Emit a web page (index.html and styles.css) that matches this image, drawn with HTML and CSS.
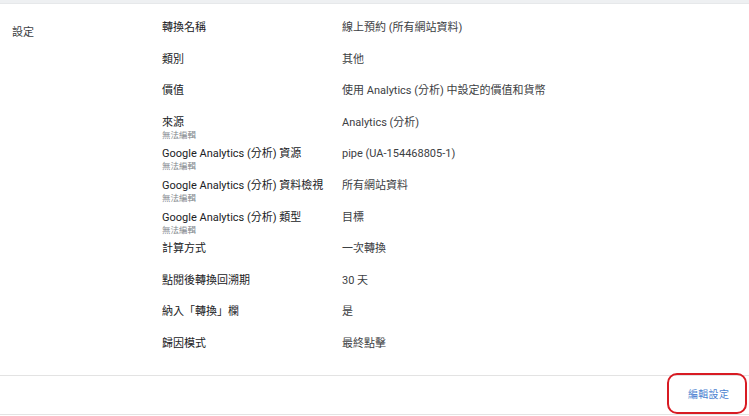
FILE: index.html
```html
<!DOCTYPE html>
<html lang="zh-Hant">
<head>
<meta charset="utf-8">
<link rel="stylesheet" href="styles.css">
</head>
<body>
<div class="topbar"></div>
<div class="section">
  <div class="section-title">設定</div>
  <div class="rows">
    <div class="row"><div class="label">轉換名稱</div><div class="value">線上預約 (所有網站資料)</div></div>
    <div class="row"><div class="label">類別</div><div class="value">其他</div></div>
    <div class="row"><div class="label">價值</div><div class="value">使用 Analytics (分析) 中設定的價值和貨幣</div></div>
    <div class="row"><div class="label">來源<div class="sub">無法編輯</div></div><div class="value">Analytics (分析)</div></div>
    <div class="row"><div class="label">Google Analytics (分析) 資源<div class="sub">無法編輯</div></div><div class="value">pipe (UA-154468805-1)</div></div>
    <div class="row"><div class="label">Google Analytics (分析) 資料檢視<div class="sub">無法編輯</div></div><div class="value">所有網站資料</div></div>
    <div class="row"><div class="label">Google Analytics (分析) 類型<div class="sub">無法編輯</div></div><div class="value">目標</div></div>
    <div class="row"><div class="label">計算方式</div><div class="value">一次轉換</div></div>
    <div class="row"><div class="label">點閱後轉換回溯期</div><div class="value">30 天</div></div>
    <div class="row"><div class="label">納入「轉換」欄</div><div class="value">是</div></div>
    <div class="row"><div class="label">歸因模式</div><div class="value">最終點擊</div></div>
  </div>
</div>
<div class="footer">
  <a class="edit" href="#">編輯設定</a>
</div>
</body>
</html>
```
FILE: styles.css
```css
html, body {
  margin: 0;
  padding: 0;
  background: #ffffff;
}
body {
  font-family: Roboto, "Noto Sans CJK TC", sans-serif;
  font-size: 11px;
  color: #202124;
  width: 749px;
  height: 416px;
  overflow: hidden;
}
.topbar {
  height: 3px;
  background: #eef0f2;
  border-bottom: 1px solid #e6e8ea;
}
.section {
  display: flex;
  padding-top: 17px;
  height: 371px;
  box-sizing: border-box;
}
.section-title {
  width: 150px;
  padding-left: 12px;
  padding-top: 5px;
  line-height: 14px;
  color: #3c4043;
}
.rows {
  display: flex;
  flex-direction: column;
}
.row {
  display: grid;
  grid-template-columns: 180px 1fr;
  height: 31.6px;
  flex-shrink: 0;
  line-height: 14px;
}
.label {
  color: #202124;
}
.value {
  color: #3c4043;
}
.sub {
  font-size: 8.5px;
  line-height: 10px;
  color: #80868b;
}
.footer {
  border-top: 1px solid #e3e3e3;
  border-bottom: 1px solid #e3e3e3;
  height: 38px;
  display: flex;
  justify-content: flex-end;
  align-items: flex-start;
  padding-right: 2px;
}
.edit {
  display: flex;
  align-items: center;
  margin-top: -3px;
  height: 41px;
  width: 80px;
  padding-left: 19px;
  box-sizing: border-box;
  border: 2px solid #d81b23;
  border-radius: 10px;
  color: #4a7fd0;
  font-size: 10px;
  text-decoration: none;
  letter-spacing: 0.3px;
}
```
